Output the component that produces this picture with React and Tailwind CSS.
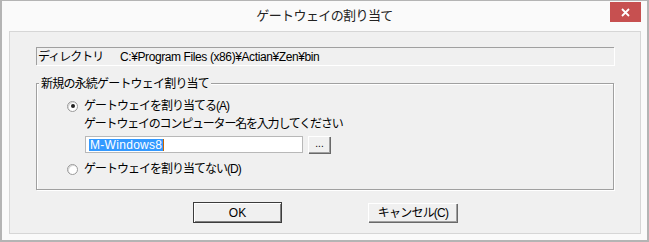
import React from 'react';

const ui = { fontFamily: '"Liberation Sans", "Noto Sans CJK JP", sans-serif' };

function Radio({ checked }) {
    return (
        <span className="flex h-[11px] w-[11px] items-center justify-center rounded-full border border-[#9a9a9a] bg-white shadow-[inset_1px_1px_0_#d8d8d8]">
            {checked && <span className="h-[4px] w-[4px] rounded-full bg-[#222]" />}
        </span>
    );
}

export default function App() {
    return (
        <div className="flex h-[242px] w-[649px] flex-col border-x-2 border-b-2 border-t border-[#b4b4b4] bg-[#fafafa] text-[12px] text-black" style={ui}>
            <div className="relative flex h-[30px] shrink-0 items-center justify-center">
                <span className="text-[13px] tracking-[-0.6px] text-[#222]">ゲートウェイの割り当て</span>
                <div className="absolute right-[6px] top-[1px] flex h-[20px] w-[31px] items-center justify-center bg-[#c75050]">
                    <svg width="9" height="9" viewBox="0 0 9 9">
                        <path d="M1 1 L8 8 M8 1 L1 8" stroke="#fff" strokeWidth="1.8" />
                    </svg>
                </div>
            </div>
            <div className="mx-[6px] ml-[7px] mb-[6px] flex flex-1 flex-col border border-[#d6d6d6] bg-[#f0f0f0] pl-[26px] pr-[26px] pt-[15px]">
                <div className="flex h-[18px] items-center border-l border-t border-[#a0a0a0] shadow-[1px_1px_0_#fff] tracking-[-1px]">
                    <span className="ml-[1px] w-[82px] shrink-0">ディレクトリ</span>
                    <span className="tracking-[-0.4px]">C:¥Program Files (x86)¥Actian¥Zen¥bin</span>
                </div>
                <div className="relative mt-[18px] h-[107px] border border-[#a0a0a0] shadow-[1px_1px_0_#fff,inset_1px_1px_0_#fff]">
                    <span className="absolute left-[2px] top-[-9px] bg-[#f0f0f0] px-[2px] tracking-[-0.8px]">新規の永続ゲートウェイ割り当て</span>
                    <div className="flex flex-col pl-[30px] pt-[15px]">
                        <div className="flex h-[14px] items-center gap-[6px]">
                            <Radio checked />
                            <span className="tracking-[-1px]">ゲートウェイを割り当てる(A)</span>
                        </div>
                        <div className="ml-[17px] mt-[4px] flex h-[14px] items-center tracking-[-1.2px]">ゲートウェイのコンピューター名を入力してください</div>
                        <div className="ml-[18px] mt-[5px] flex items-center gap-[5px]">
                            <div className="flex h-[17px] w-[218px] items-center border border-[#b8b8b8] bg-white pl-[3px]">
                                <span className="flex h-[12px] items-center bg-[#3399ff] px-[1px] text-white tracking-[0.3px]">M-Windows8</span>
                                <span className="h-[12px] w-[1px] bg-[#c86400]" />
                            </div>
                            <div className="flex h-[17px] w-[22px] items-center justify-center border-l border-t border-white bg-[#f0f0f0] pb-[4px] shadow-[1px_1px_0_#696969,inset_-1px_-1px_0_#a0a0a0] text-[10px]">...</div>
                        </div>
                        <div className="mt-[9px] flex h-[14px] items-center gap-[6px]">
                            <Radio />
                            <span className="tracking-[-1px]">ゲートウェイを割り当てない(D)</span>
                        </div>
                    </div>
                </div>
                <div className="mt-[12px] flex pl-[157px]">
                    <div className="flex h-[21px] w-[89px] items-center justify-center border border-[#3c3c3c] bg-[#f0f0f0] shadow-[inset_1px_1px_0_#fff,inset_-1px_-1px_0_#808080]">OK</div>
                    <div className="ml-[86px] mt-[1px] flex h-[19px] w-[89px] items-center justify-center border-l border-t border-white bg-[#f0f0f0] shadow-[1px_1px_0_#696969,inset_-1px_-1px_0_#a0a0a0] tracking-[-0.8px]">キャンセル(C)</div>
                </div>
            </div>
        </div>
    );
}
